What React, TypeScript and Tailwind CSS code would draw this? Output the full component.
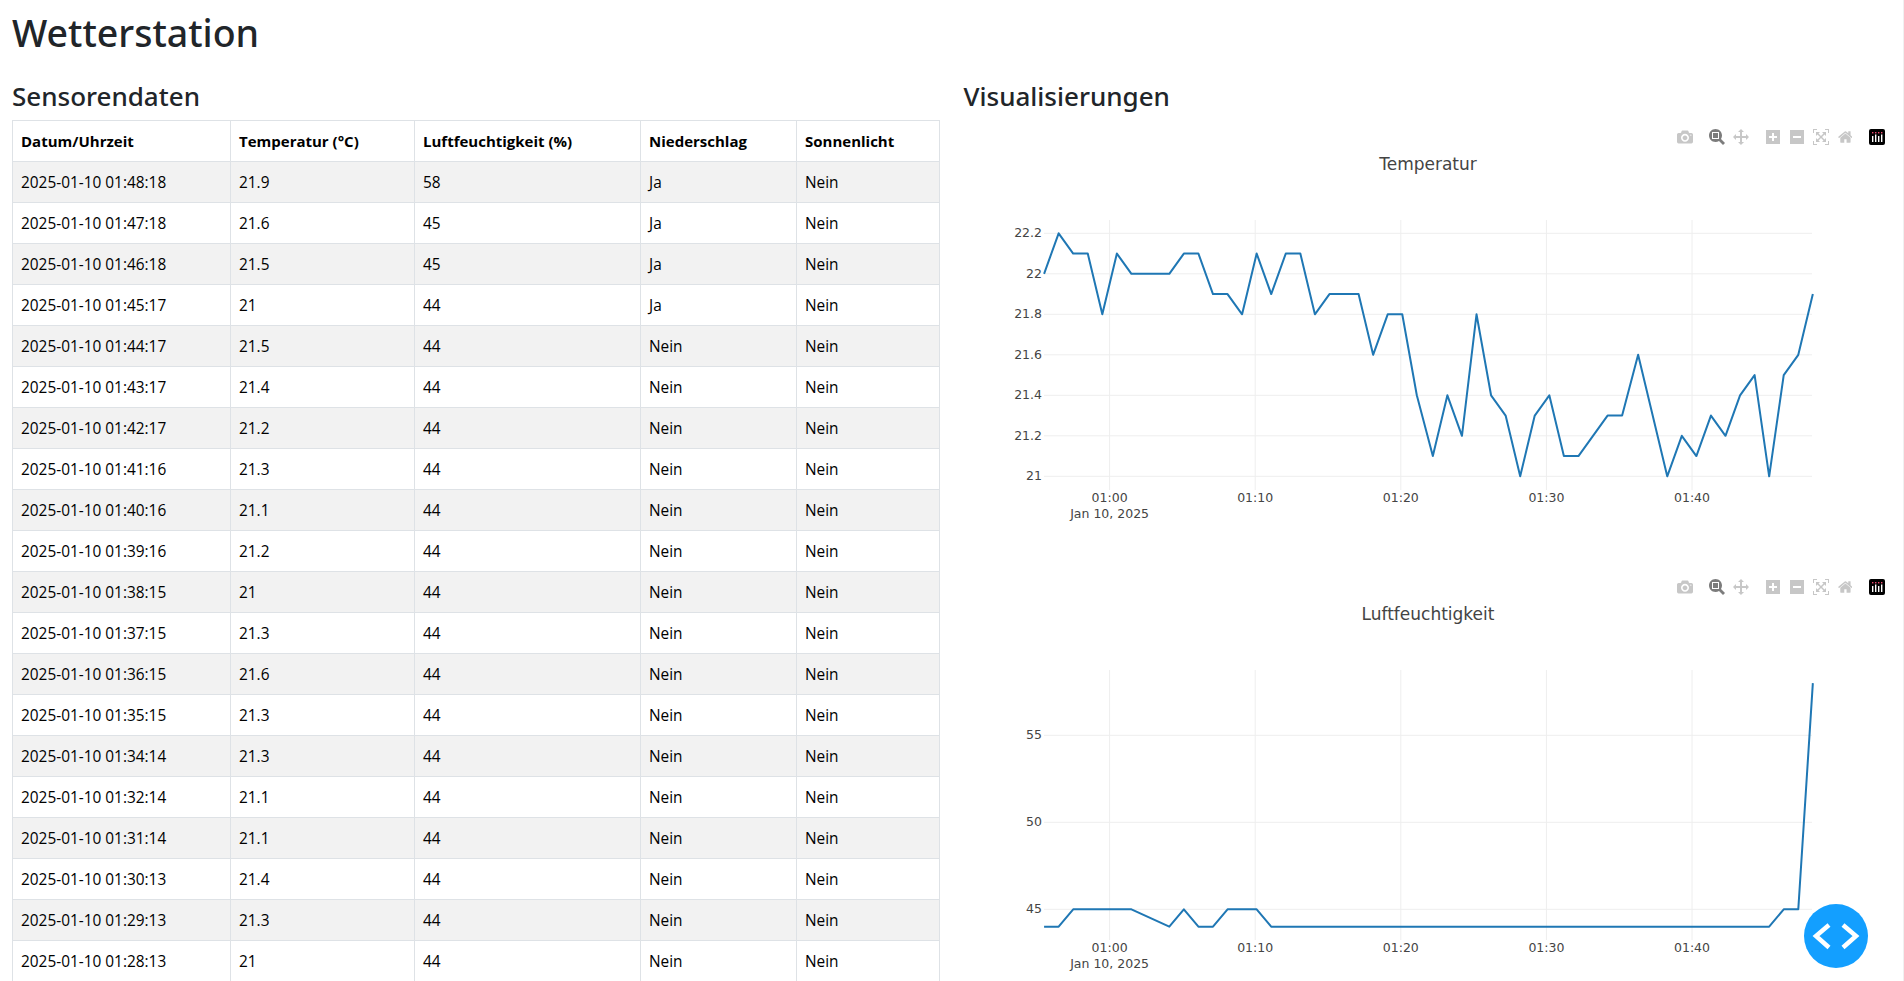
const rows = [
  ["2025-01-10 01:48:18", "21.9", "58", "Ja", "Nein"],
  ["2025-01-10 01:47:18", "21.6", "45", "Ja", "Nein"],
  ["2025-01-10 01:46:18", "21.5", "45", "Ja", "Nein"],
  ["2025-01-10 01:45:17", "21", "44", "Ja", "Nein"],
  ["2025-01-10 01:44:17", "21.5", "44", "Nein", "Nein"],
  ["2025-01-10 01:43:17", "21.4", "44", "Nein", "Nein"],
  ["2025-01-10 01:42:17", "21.2", "44", "Nein", "Nein"],
  ["2025-01-10 01:41:16", "21.3", "44", "Nein", "Nein"],
  ["2025-01-10 01:40:16", "21.1", "44", "Nein", "Nein"],
  ["2025-01-10 01:39:16", "21.2", "44", "Nein", "Nein"],
  ["2025-01-10 01:38:15", "21", "44", "Nein", "Nein"],
  ["2025-01-10 01:37:15", "21.3", "44", "Nein", "Nein"],
  ["2025-01-10 01:36:15", "21.6", "44", "Nein", "Nein"],
  ["2025-01-10 01:35:15", "21.3", "44", "Nein", "Nein"],
  ["2025-01-10 01:34:14", "21.3", "44", "Nein", "Nein"],
  ["2025-01-10 01:32:14", "21.1", "44", "Nein", "Nein"],
  ["2025-01-10 01:31:14", "21.1", "44", "Nein", "Nein"],
  ["2025-01-10 01:30:13", "21.4", "44", "Nein", "Nein"],
  ["2025-01-10 01:29:13", "21.3", "44", "Nein", "Nein"],
  ["2025-01-10 01:28:13", "21", "44", "Nein", "Nein"],
];

// minutes after 01:00, temperature, humidity
const samples: [number, number, number][] = [
  [-4.5, 22, 44], [-3.5, 22.2, 44], [-2.5, 22.1, 45], [-1.5, 22.1, 45], [-0.5, 21.8, 45],
  [0.5, 22.1, 45], [1.5, 22, 45], [4.1, 22, 44], [5.1, 22.1, 45], [6.1, 22.1, 44],
  [7.1, 21.9, 44], [8.1, 21.9, 45], [9.1, 21.8, 45], [10.1, 22.1, 45], [11.1, 21.9, 44],
  [12.1, 22.1, 44], [13.1, 22.1, 44], [14.1, 21.8, 44], [15.1, 21.9, 44], [16.1, 21.9, 44],
  [17.1, 21.9, 44], [18.1, 21.6, 44], [19.1, 21.8, 44], [20.1, 21.8, 44], [21.1, 21.4, 44],
  [22.2, 21.1, 44], [23.2, 21.4, 44], [24.2, 21.2, 44], [25.2, 21.8, 44], [26.2, 21.4, 44],
  [27.2, 21.3, 44], [28.2, 21, 44], [29.2, 21.3, 44], [30.2, 21.4, 44], [31.2, 21.1, 44],
  [32.2, 21.1, 44], [34.2, 21.3, 44], [35.2, 21.3, 44], [36.3, 21.6, 44], [37.3, 21.3, 44],
  [38.3, 21, 44], [39.3, 21.2, 44], [40.3, 21.1, 44], [41.3, 21.3, 44], [42.3, 21.2, 44],
  [43.3, 21.4, 44], [44.3, 21.5, 44], [45.3, 21, 44], [46.3, 21.5, 45], [47.3, 21.6, 45],
  [48.3, 21.9, 58],
];

const xOf = (minute: number) => 145.6 + minute * 14.56;
const xTicks = [0, 10, 20, 30, 40];
const xTickLabels = ["01:00", "01:10", "01:20", "01:30", "01:40"];

const ModeIcon = ({ d, width = 1000, active = false }: { d: string; width?: number; active?: boolean }) => (
  <svg
    viewBox={`0 0 ${width} 1000`}
    className={`h-4 ${active ? "fill-[#7c7c7c]" : "fill-[#c7c7c7]"}`}
  >
    <path d={d} transform="matrix(1 0 0 -1 0 850)" />
  </svg>
);

const ModeBar = () => (
  <div className="absolute top-[9px] right-[2px] flex items-center">
    <div className="flex w-[24px] justify-center">
      <ModeIcon d="m500 450c-83 0-150-67-150-150 0-83 67-150 150-150 83 0 150 67 150 150 0 83-67 150-150 150z m400 150h-120c-16 0-34 13-39 29l-31 93c-6 15-23 28-40 28h-340c-16 0-34-13-39-28l-31-94c-6-15-23-28-40-28h-120c-55 0-100-45-100-100v-450c0-55 45-100 100-100h800c55 0 100 45 100 100v450c0 55-45 100-100 100z m-400-550c-138 0-250 112-250 250 0 138 112 250 250 250 138 0 250-112 250-250 0-138-112-250-250-250z m365 380c-19 0-35 16-35 35 0 19 16 35 35 35 19 0 35-16 35-35 0-19-16-35-35-35z" />
    </div>
    <div className="ml-[8px] flex w-[24px] justify-center">
      <ModeIcon
        active
        d="m1000-25l-250 251c40 63 63 138 63 218 0 224-182 406-407 406-224 0-406-182-406-406s183-406 407-406c80 0 155 22 218 62l250-250 125 125z m-812 250l0 438 437 0 0-438-437 0z m62 375l313 0 0-312-313 0 0 312z"
      />
    </div>
    <div className="flex w-[24px] justify-center">
      <ModeIcon d="m1000 350l-187 188 0-125-250 0 0 250 125 0-188 187-187-187 125 0 0-250-250 0 0 125-188-188 186-187 0 125 252 0 0-250-125 0 187-188 188 188-125 0 0 250 250 0 0-126 187 188z" />
    </div>
    <div className="ml-[8px] flex w-[24px] justify-center">
      <ModeIcon
        width={875}
        d="m1 787l0-875 875 0 0 875-875 0z m687-500l-187 0 0-187-125 0 0 187-188 0 0 125 188 0 0 187 125 0 0-187 187 0 0-125z"
      />
    </div>
    <div className="flex w-[24px] justify-center">
      <ModeIcon
        width={875}
        d="m0 788l0-876 875 0 0 876-875 0z m688-500l-500 0 0 125 500 0 0-125z"
      />
    </div>
    <div className="flex w-[24px] justify-center">
      <ModeIcon d="m250 850l-187 0-63 0 0-62 0-188 63 0 0 188 187 0 0 62z m688 0l-188 0 0-62 188 0 0-188 62 0 0 188 0 62-62 0z m-875-938l0 188-63 0 0-188 0-62 63 0 187 0 0 62-187 0z m875 188l0-188-188 0 0-62 188 0 62 0 0 62 0 188-62 0z m-125 188l-1 0-93-94-156 156 156 156 92-93 2 0 0 250-250 0 0-2 93-92-156-156-156 156 94 92 0 2-250 0 0-250 0 0 93 93 157-156-157-156-93 94 0 0 0-250 250 0 0 0-94 93 156 157 156-157-93-93 0 0 250 0 0 250z" />
    </div>
    <div className="flex w-[24px] justify-center">
      <ModeIcon
        width={928.6}
        d="m786 296v-267q0-15-11-26t-25-10h-214v214h-143v-214h-214q-15 0-25 10t-11 26v267q0 1 0 2t0 2l321 264 321-264q1-1 1-4z m124 39l-34-41q-5-5-12-6h-2q-7 0-12 3l-386 322-386-322q-7-4-13-4-7 2-12 7l-35 41q-4 5-3 13t6 12l401 334q18 15 42 15t43-15l136-114v109q0 8 5 13t13 5h107q8 0 13-5t5-13v-227l122-102q5-5 6-12t-4-13z"
      />
    </div>
    <div className="ml-[8px] flex w-[24px] justify-center">
      <svg viewBox="0 0 16 16" className="h-4 w-4">
        <rect width="16" height="16" rx="2" fill="#000" />
        <g fill="#fff">
          <rect x="3" y="7" width="1.4" height="6" />
          <rect x="6" y="5.5" width="1.4" height="7.5" />
          <rect x="9" y="7" width="1.4" height="6" />
          <rect x="12" y="5.5" width="1.4" height="7.5" />
        </g>
        <g fill="#ef476f">
          <rect x="3" y="3" width="1.4" height="1.4" />
          <rect x="6" y="3" width="1.4" height="1.4" />
          <rect x="9" y="3" width="1.4" height="1.4" />
          <rect x="12" y="3" width="1.4" height="1.4" />
        </g>
      </svg>
    </div>
  </div>
);

interface ChartProps {
  title: string;
  yTicks: { label: string; y: number }[];
  points: string;
}

const Chart = ({ title, yTicks, points }: ChartProps) => (
  <div className="relative h-[450px] w-full">
    <ModeBar />
    <svg width="928" height="450" className="font-['DejaVu_Sans',sans-serif]">
      <text x="464" y="50" textAnchor="middle" fill="#444" fontSize="17">
        {title}
      </text>
      {xTicks.map((m) => (
        <line key={m} x1={xOf(m)} x2={xOf(m)} y1="100" y2="370" stroke="#eee" />
      ))}
      {yTicks.map((t) => (
        <line key={t.label} x1="80" x2="848" y1={t.y} y2={t.y} stroke="#eee" />
      ))}
      {yTicks.map((t) => (
        <text key={t.label} x="78" y={t.y + 4} textAnchor="end" fill="#444" fontSize="12.5">
          {t.label}
        </text>
      ))}
      {xTicks.map((m, i) => (
        <text key={m} x={xOf(m)} y="382" textAnchor="middle" fill="#444" fontSize="12.5">
          {xTickLabels[i]}
        </text>
      ))}
      <text x={xOf(0)} y="398" textAnchor="middle" fill="#444" fontSize="12.5">
        Jan 10, 2025
      </text>
      <polyline points={points} fill="none" stroke="#1f77b4" strokeWidth="2" strokeLinejoin="round" />
    </svg>
  </div>
);

const tempY = (v: number) => 236.3 - (v - 21) * 202.5 + 120;
const humY = (v: number) => 339.3 - (v - 45) * 17.4;

const App = () => {
  const tempPoints = samples.map((s) => `${xOf(s[0])},${tempY(s[1])}`).join(" ");
  const humPoints = samples.map((s) => `${xOf(s[0])},${humY(s[2])}`).join(" ");

  return (
    <div className="relative h-[981px] overflow-hidden border-r border-[#f0f0f0] bg-white font-['Open_Sans',sans-serif] text-[#212529]">
      <h1 className="pt-[9px] pl-3 font-['Noto_Sans',sans-serif] text-[37.5px] leading-[48px] font-medium">Wetterstation</h1>

      <div className="mt-[23px] grid grid-cols-2">
        <div className="px-3">
          <h3 className="mb-1.5 font-['Noto_Sans',sans-serif] text-[26px] leading-[33.6px] font-medium">Sensorendaten</h3>
          <table className="w-[927px] table-fixed border-collapse text-[15.4px] leading-6 text-black">
            <colgroup>
              <col className="w-[218px]" />
              <col className="w-[184px]" />
              <col className="w-[226px]" />
              <col className="w-[156px]" />
              <col className="w-[143px]" />
            </colgroup>
            <thead>
              <tr>
                {["Datum/Uhrzeit", "Temperatur (°C)", "Luftfeuchtigkeit (%)", "Niederschlag", "Sonnenlicht"].map((h) => (
                  <th key={h} className="border border-[#dee2e6] px-2 py-2 text-left text-[15px] font-bold">
                    {h}
                  </th>
                ))}
              </tr>
            </thead>
            <tbody>
              {rows.map((row, i) => (
                <tr key={row[0]} className={i % 2 === 0 ? "bg-[#f2f2f2]" : "bg-white"}>
                  {row.map((cell, j) => (
                    <td key={j} className="border border-[#dee2e6] px-2 pt-[9px] pb-[7px]">
                      {cell}
                    </td>
                  ))}
                </tr>
              ))}
            </tbody>
          </table>
        </div>

        <div className="px-3">
          <h3 className="mb-1.5 font-['Noto_Sans',sans-serif] text-[26px] leading-[33.6px] font-medium">Visualisierungen</h3>
          <Chart
            title="Temperatur"
            points={tempPoints}
            yTicks={[
              { label: "22.2", y: 113.3 },
              { label: "22", y: 153.8 },
              { label: "21.8", y: 194.3 },
              { label: "21.6", y: 234.8 },
              { label: "21.4", y: 275.3 },
              { label: "21.2", y: 315.8 },
              { label: "21", y: 356.3 },
            ]}
          />
          <Chart
            title="Luftfeuchtigkeit"
            points={humPoints}
            yTicks={[
              { label: "55", y: 165.3 },
              { label: "50", y: 252.3 },
              { label: "45", y: 339.3 },
            ]}
          />
        </div>
      </div>

      <button
        type="button"
        className="fixed right-[36px] bottom-[13px] flex h-16 w-16 items-center justify-center rounded-full bg-[#139fff]"
      >
        <svg viewBox="0 0 64 64" className="h-16 w-16" fill="none" stroke="#fff" strokeWidth="4.5">
          <path d="M25 21 12 32 25 43.5" />
          <path d="M39 21 52 32 39 43.5" />
        </svg>
      </button>
    </div>
  );
};

export default App;
